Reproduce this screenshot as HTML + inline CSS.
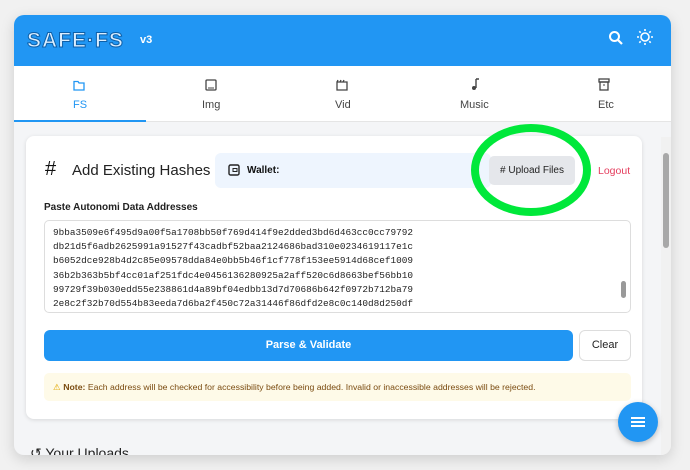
<!DOCTYPE html>
<html><head><style>
*{box-sizing:border-box;margin:0;padding:0}
body{width:690px;height:470px;background:#f1f1f1;font-family:"Liberation Sans",sans-serif;position:relative;overflow:hidden}
.win{position:absolute;left:14px;top:15px;width:657px;height:440px;border-radius:10px;overflow:hidden;background:#f4f5f7;box-shadow:0 4px 14px rgba(0,0,0,.15)}
.hdr{position:absolute;left:0;top:0;width:657px;height:51px;background:#2196f3}
.logo{position:absolute;left:13px;top:14px;font:bold 21px "Liberation Sans",sans-serif;color:#dbeeff;letter-spacing:1px;-webkit-text-stroke:1px #0d5fa8}
.v3{position:absolute;left:126px;top:19px;color:#fff;font-weight:bold;font-size:11px}
.mono{font-family:"Liberation Mono",monospace;font-size:9.4px;color:#222;line-height:14.2px}
.lbl{position:absolute;top:84px;font-size:11px;color:#444}
</style></head><body>
<div class="win">
 <div class="hdr">
  <div class="logo">SAFE·FS</div><div class="v3">v3</div>
  <svg style="position:absolute;left:594px;top:15px" width="16" height="16" viewBox="0 0 16 16"><circle cx="6.5" cy="6.5" r="4.5" fill="none" stroke="#fff" stroke-width="2"/><path d="M10 10l4 4" stroke="#fff" stroke-width="2.2"/></svg>
  <svg style="position:absolute;left:622px;top:13px" width="18" height="18" viewBox="0 0 18 18" stroke="#fff" stroke-width="1.6" fill="none"><circle cx="9" cy="9" r="4"/><path d="M9 1v2M9 15v2M1 9h2M15 9h2M3.3 3.3l1.4 1.4M13.3 13.3l1.4 1.4M3.3 14.7l1.4-1.4M13.3 4.7l1.4-1.4"/></svg>
 </div>
 <div style="position:absolute;left:0;top:51px;width:657px;height:56px;background:#fff;border-bottom:1px solid #e5e5e5"></div>
 <svg style="position:absolute;left:59px;top:65px" width="12" height="11"><path d="M1 1.5h4l1 1.5h5v7H1z" fill="none" stroke="#2196f3" stroke-width="1.3"/></svg>
 <svg style="position:absolute;left:191px;top:64px" width="12" height="12"><rect x="1" y="1" width="10" height="10" rx="1" fill="none" stroke="#444" stroke-width="1.3"/><path d="M3 9h6" stroke="#444"/></svg>
 <svg style="position:absolute;left:322px;top:64px" width="12" height="12"><path d="M1 3h10v8H1z M1 3l1-2 M4 3l1-2 M7 3l1-2" fill="none" stroke="#444" stroke-width="1.3"/></svg>
 <svg style="position:absolute;left:456px;top:63px" width="10" height="13"><path d="M6 1v9" stroke="#444" stroke-width="1.4"/><circle cx="4" cy="10" r="2" fill="#444"/><path d="M6 1h3" stroke="#444" stroke-width="1.4"/></svg>
 <svg style="position:absolute;left:584px;top:63px" width="12" height="13"><rect x="1" y="1" width="10" height="3" fill="none" stroke="#444" stroke-width="1.3"/><rect x="2" y="4" width="8" height="8" fill="none" stroke="#444" stroke-width="1.3"/><path d="M5 7h2" stroke="#444"/></svg>
 <span class="lbl" style="left:59px;color:#2196f3">FS</span>
 <span class="lbl" style="left:188px">Img</span>
 <span class="lbl" style="left:321px">Vid</span>
 <span class="lbl" style="left:446px">Music</span>
 <span class="lbl" style="left:584px">Etc</span>
 <div style="position:absolute;left:0;top:105px;width:132px;height:2px;background:#2196f3"></div>
 <div style="position:absolute;left:647px;top:122px;width:10px;height:318px;background:#f1f1f1"></div>
 <div style="position:absolute;left:649px;top:138px;width:6px;height:95px;background:#a8a8a8;border-radius:3px"></div>
 <div style="position:absolute;left:12px;top:121px;width:616px;height:283px;background:#fff;border-radius:8px;box-shadow:0 1px 4px rgba(0,0,0,.12)">
  <div style="position:absolute;left:19px;top:22px;font-size:20px;color:#111">#</div>
  <div style="position:absolute;left:46px;top:26px;font-size:15px;color:#222">Add Existing Hashes</div>
  <div style="position:absolute;left:189px;top:17px;width:276px;height:35px;background:#eef5fe;border-radius:6px"></div>
  <svg style="position:absolute;left:202px;top:28px" width="12" height="12"><rect x="1" y="1" width="10" height="10" rx="1.5" fill="none" stroke="#222" stroke-width="1.4"/><rect x="5" y="4.5" width="4" height="3" fill="none" stroke="#222"/></svg>
  <div style="position:absolute;left:221px;top:29px;font-size:10px;font-weight:bold;color:#111">Wallet:</div>
  <div style="position:absolute;left:463px;top:20px;width:86px;height:29px;background:#e5e7eb;border-radius:5px;font-size:10px;color:#222;text-align:center;line-height:29px"># Upload Files</div>
  <div style="position:absolute;left:572px;top:29px;font-size:10.5px;color:#e53e5e">Logout</div>
  <div style="position:absolute;left:18px;top:66px;font-size:10px;font-weight:bold;color:#222">Paste Autonomi Data Addresses</div>
  <div style="position:absolute;left:18px;top:84px;width:587px;height:93px;border:1px solid #ddd;border-radius:5px;overflow:hidden">
   <div class="mono" style="position:absolute;left:8px;top:5px">9bba3509e6f495d9a00f5a1708bb50f769d414f9e2dded3bd6d463cc0cc79792<br>db21d5f6adb2625991a91527f43cadbf52baa2124686bad310e0234619117e1c<br>b6052dce928b4d2c85e09578dda84e0bb5b46f1cf778f153ee5914d68cef1009<br>36b2b363b5bf4cc01af251fdc4e0456136280925a2aff520c6d8663bef56bb10<br>99729f39b030edd55e238861d4a89bf04edbb13d7d70686b642f0972b712ba79<br>2e8c2f32b70d554b83eeda7d6ba2f450c72a31446f86dfd2e8c0c140d8d250df</div>
   <div style="position:absolute;left:576px;top:60px;width:5px;height:17px;background:#999;border-radius:3px"></div>
  </div>
  <div style="position:absolute;left:18px;top:194px;width:529px;height:31px;background:#2196f3;border-radius:6px;color:#fff;font-size:11px;font-weight:bold;text-align:center;line-height:31px">Parse &amp; Validate</div>
  <div style="position:absolute;left:553px;top:194px;width:52px;height:31px;border:1px solid #ddd;border-radius:6px;font-size:11px;color:#222;text-align:center;line-height:29px">Clear</div>
  <div style="position:absolute;left:18px;top:237px;width:587px;height:28px;background:#fefae8;border-radius:5px;font-size:8.7px;color:#7a4b10;line-height:28px;padding-left:9px"><span style="color:#e0a800">⚠</span> <b>Note:</b> Each address will be checked for accessibility before being added. Invalid or inaccessible addresses will be rejected.</div>
 </div>
 <div style="position:absolute;left:16px;top:430px;font-size:14px;color:#222">↺ Your Uploads</div>
 <div style="position:absolute;left:604px;top:387px;width:40px;height:40px;border-radius:50%;background:#2196f3;box-shadow:0 2px 6px rgba(0,0,0,.25)"></div>
 <div style="position:absolute;left:617px;top:402px;width:14px;height:2px;background:#fff;box-shadow:0 4px 0 #fff,0 8px 0 #fff"></div>
</div>
<svg style="position:absolute;left:0;top:0" width="690" height="470"><ellipse cx="531" cy="170" rx="56" ry="42" fill="none" stroke="#00e83a" stroke-width="8"/></svg>
</body></html>
